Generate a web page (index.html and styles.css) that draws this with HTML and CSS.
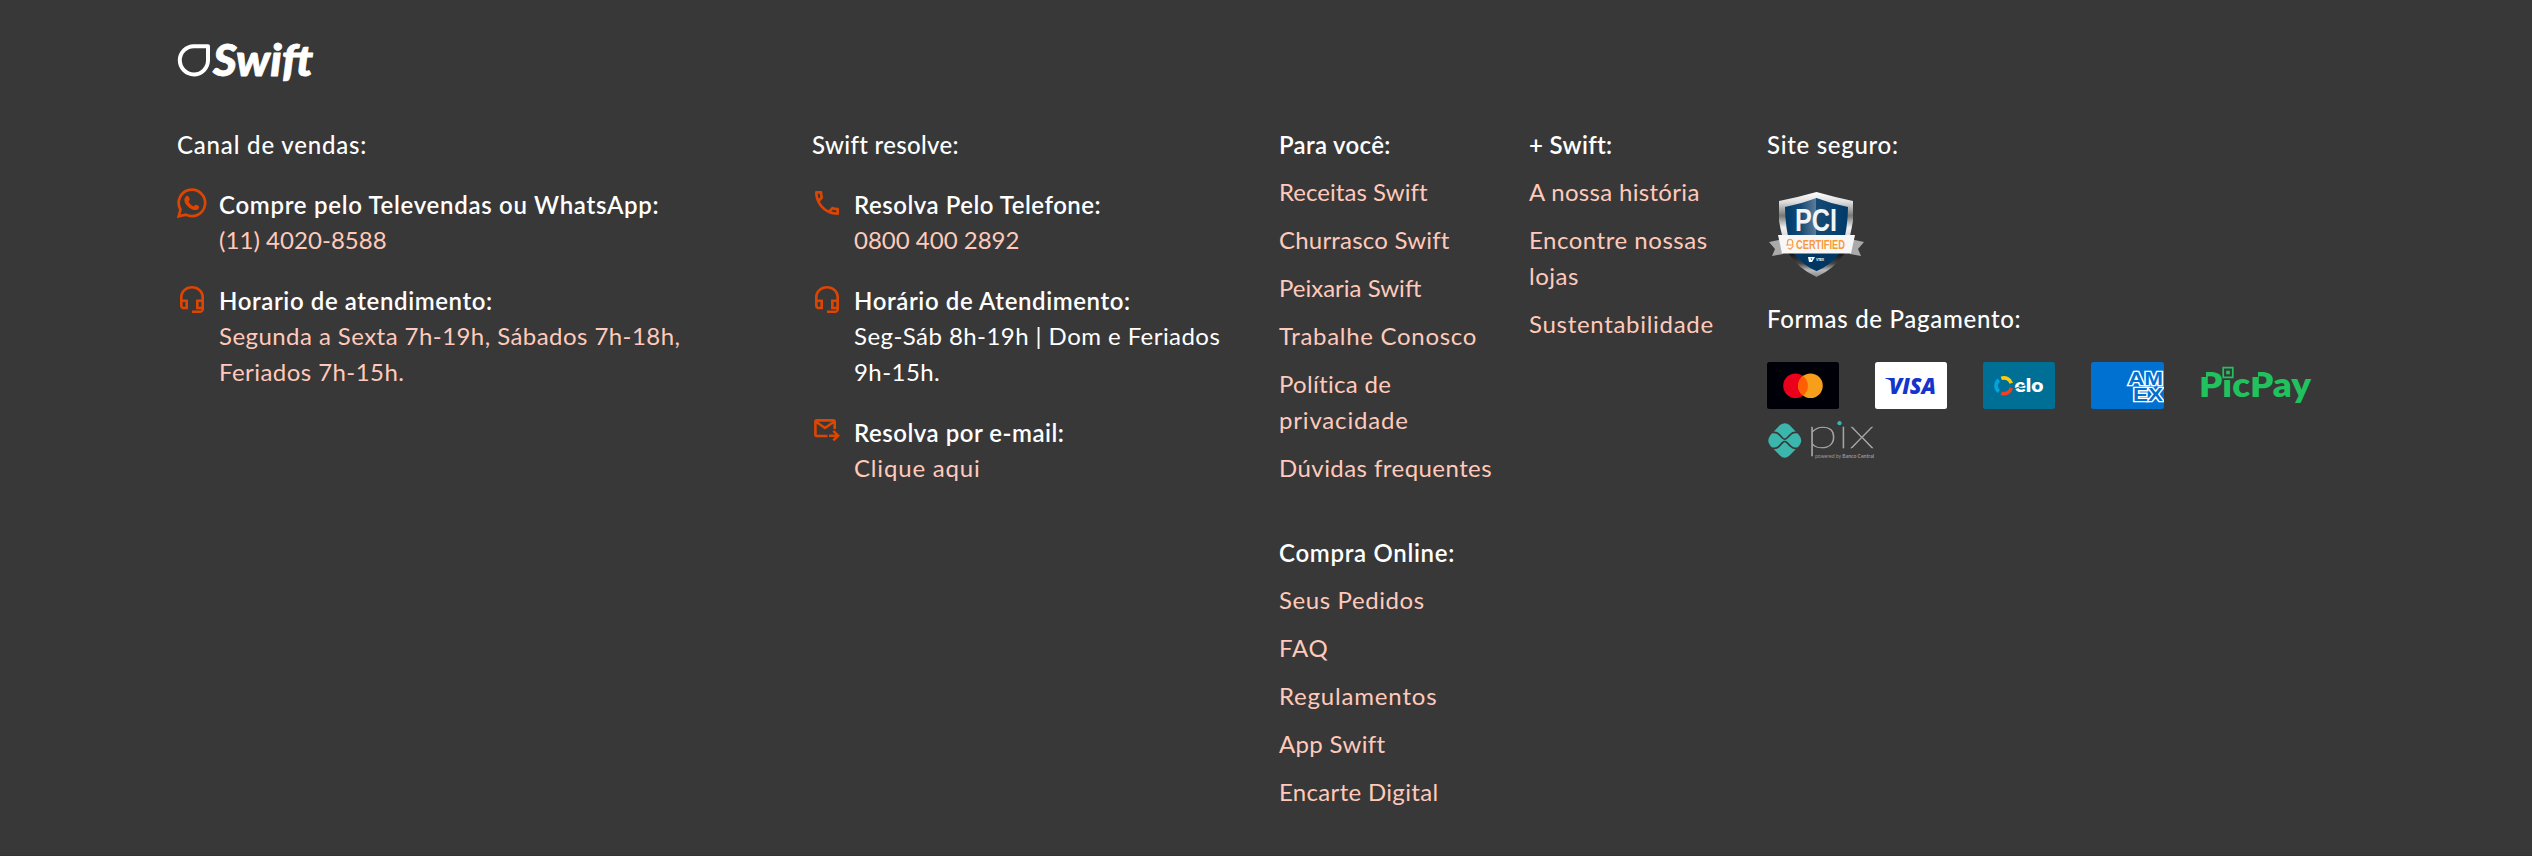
FILE: index.html
```html
<!DOCTYPE html>
<html lang="pt-BR">
<head>
<meta charset="utf-8">
<title>Swift</title>
<link rel="stylesheet" href="styles.css">
</head>
<body>
<svg width="0" height="0" class="defs">
  <symbol id="headset" viewBox="3 1 18 22" preserveAspectRatio="none"><path d="M12 1a9 9 0 0 0-9 9v7c0 1.66 1.34 3 3 3h3v-8H5v-2c0-3.87 3.13-7 7-7s7 3.13 7 7v2h-4v8h4v1h-7v2h6c1.66 0 3-1.34 3-3V10a9 9 0 0 0-9-9zM7 14v4H6c-.55 0-1-.45-1-1v-3h2zm12 4h-2v-4h2v4z"/></symbol>
</svg>
<footer class="footer">
  <a class="logo">
    <svg width="160" height="60" viewBox="0 0 160 60">
      <path d="M31 6.200H17.200A14.100 14.100 0 1 0 31 20.300Z" fill="none" stroke="#fff" stroke-width="4" stroke-linejoin="round"/>
      <text class="wordmark" x="36" y="36" textLength="100" lengthAdjust="spacingAndGlyphs">Swift</text>
    </svg>
  </a>
  <div class="columns">
    <section>
      <h2 class="title t8">Canal de vendas:</h2>
      <div class="item">
        <svg class="icon wa" width="30" height="30" viewBox="0 0 30 30"><path d="M1.700 28.300 3.500 21.500A13.200 13.200 0 1 1 8.800 26.600Z" fill="none" stroke="#dd4502" stroke-width="2.700"/><path d="M9.200 8.300c.7-.6 2-.6 2.400.2l1.100 2.600c.4 1-.9 1.900-1.200 2.500 1.100 2.200 2.900 3.900 5.100 4.900.8-.5 1.500-2 2.400-1.700l2.700 1.300c.8.5.4 2-.3 2.800-1.500 1.600-3.900 1.500-6.500.3-3.400-1.500-5.700-4-7.100-7-.9-2.100-.4-4.700 1.400-5.900z"/></svg>
        <div><h3 class="t7">Compre pelo Televendas ou WhatsApp:</h3><a class="t1">(11) 4020-8588</a></div>
      </div>
      <div class="item">
        <svg class="icon hs" width="24" height="27"><use href="#headset"/></svg>
        <div><h3 class="t6">Horario de atendimento:</h3><a class="t4">Segunda a Sexta 7h-19h, Sábados 7h-18h,<br>Feriados 7h-15h.</a></div>
      </div>
    </section>
    <section>
      <h2 class="title t3">Swift resolve:</h2>
      <div class="item">
        <svg class="icon ph" width="24" height="24" viewBox="3 3 18 18"><path d="M6.540 5c.06.89.21 1.760.45 2.590l-1.200 1.200c-.41-1.200-.67-2.470-.76-3.790h1.510m9.860 12.020c.85.24 1.720.39 2.600.45v1.490c-1.320-.09-2.590-.35-3.800-.75l1.200-1.190M7.500 3H4c-.55 0-1 .45-1 1 0 9.390 7.610 17 17 17 .55 0 1-.45 1-1v-3.490c0-.55-.45-1-1-1-1.240 0-2.450-.2-3.570-.57-.1-.04-.21-.05-.31-.05-.26 0-.51.1-.71.29l-2.200 2.200c-2.830-1.450-5.150-3.760-6.590-6.590l2.200-2.200c.28-.28.36-.67.25-1.020C8.700 6.450 8.500 5.250 8.500 4c0-.55-.45-1-1-1z"/></svg>
        <div><h3 class="t5">Resolva Pelo Telefone:</h3><a class="t0">0800 400 2892</a></div>
      </div>
      <div class="item">
        <svg class="icon hs" width="24" height="27"><use href="#headset"/></svg>
        <div><h3 class="t6">Horário de Atendimento:</h3><p class="t4">Seg-Sáb 8h-19h | Dom e Feriados<br>9h-15h.</p></div>
      </div>
      <div class="item">
        <svg class="icon ml" width="26" height="22" viewBox="0 0 26 22"><path d="M13.500 17H2.800Q1.400 17 1.400 15.600V2.800Q1.400 1.400 2.800 1.400H19.300Q20.700 1.400 20.700 2.800V10M2 2.800 11 9 20 2.800M15 16.700H23M19.300 11.900 24.100 16.700 19.300 21.400" fill="none" stroke="#dd4502" stroke-width="2.600"/></svg>
        <div><h3 class="t5">Resolva por e-mail:</h3><a class="t8">Clique aqui</a></div>
      </div>
    </section>
    <section>
      <h2 class="title strong t3">Para você:</h2>
      <ul>
        <li class="t1">Receitas Swift</li>
        <li class="t2">Churrasco Swift</li>
        <li class="t0">Peixaria Swift</li>
        <li class="t7">Trabalhe Conosco</li>
        <li><span class="t3">Política de</span><br><span class="t8">privacidade</span></li>
        <li class="t4">Dúvidas frequentes</li>
      </ul>
      <h2 class="title strong second t7">Compra Online:</h2>
      <ul>
        <li class="t6">Seus Pedidos</li>
        <li class="t8">FAQ</li>
        <li class="t8">Regulamentos</li>
        <li class="t3">App Swift</li>
        <li class="t3">Encarte Digital</li>
      </ul>
    </section>
    <section>
      <h2 class="title strong t3">+ Swift:</h2>
      <ul>
        <li class="t3">A nossa história</li>
        <li class="t5">Encontre nossas<br>lojas</li>
        <li class="t7">Sustentabilidade</li>
      </ul>
    </section>
    <section>
      <h2 class="title t7">Site seguro:</h2>
      <svg class="pci" width="98" height="90" viewBox="0 0 98 90">
        <defs>
          <linearGradient id="silver" x1="0" y1="0" x2="0" y2="1"><stop offset="0" stop-color="#fff"/><stop offset=".12" stop-color="#ddd"/><stop offset=".28" stop-color="#777"/><stop offset=".42" stop-color="#f0f0f0"/><stop offset=".6" stop-color="#ccc"/><stop offset=".72" stop-color="#111"/><stop offset=".84" stop-color="#444"/><stop offset=".92" stop-color="#bbb"/><stop offset="1" stop-color="#888"/></linearGradient>
          <linearGradient id="navy"><stop offset="0" stop-color="#003a68"/><stop offset=".25" stop-color="#164a75"/><stop offset=".49" stop-color="#5c7c98"/><stop offset=".5" stop-color="#164a75"/><stop offset="1" stop-color="#003a68"/></linearGradient>
        </defs>
        <path d="M2 52 16 49V64L5 66 8 59ZM97 52 83 49V64L94 66 91 59Z" fill="#aaa"/>
        <path d="M12 11Q32 7 49.500 2Q67 7 86 11V31Q83 48 79 61Q69 78 49.500 87Q30 78 20 61Q15 48 12 31Z" fill="url(#silver)"/>
        <path d="M18 17Q34 14 49.500 8Q65 14 81 17Q81 37 75 59Q66 74 49.500 81Q33 74 24 59Q18 37 18 17Z" fill="url(#navy)"/>
        <path d="M24 59H75Q66 74 49.500 81Q33 74 24 59Z" fill="#003763"/>
        <text x="28" y="40.500" class="pci-name" textLength="42" lengthAdjust="spacingAndGlyphs">PCI</text>
        <path d="M11 45H88L84 63.500H15Z" fill="#f7f7f7"/>
        <path d="M20.500 55v-3a2.600 2.600 0 0 1 5.200 0v3M19 55h7M21 58l2.500 1.200 3-3.500" fill="none" stroke="#f7a04a" stroke-width="1.200"/>
        <text x="29" y="58.800" class="pci-cert" textLength="49" lengthAdjust="spacingAndGlyphs">CERTIFIED</text>
        <path d="M41 67h7l-3 5h-3zM43.500 68.500h2l-1 1.500z" fill="#fff" fill-rule="evenodd"/>
        <text x="49" y="71" class="pci-vtex" textLength="8">VTEX</text>
      </svg>
      <h2 class="title pay-title t7">Formas de Pagamento:</h2>
      <div class="payments">
        <svg width="72" height="47" viewBox="0 0 72 47"><rect width="72" height="47" rx="2.500" fill="#000008"/><circle cx="28.500" cy="23.700" r="12.300" fill="#eb001b"/><circle cx="43.500" cy="23.700" r="12.300" fill="#f79e1b"/><path d="M36 13.900a12.300 12.300 0 0 1 0 19.600 12.300 12.300 0 0 1 0-19.600z" fill="#ff5f00"/></svg>
        <svg width="72" height="47" viewBox="0 0 72 47"><rect width="72" height="47" rx="2.500" fill="#fff"/><path d="M10.500 16H16L18 21Q15.500 17.500 10.500 16.800Z" fill="#1434cb"/><text x="14" y="31.500" class="visa" textLength="47" lengthAdjust="spacingAndGlyphs">VISA</text></svg>
        <svg width="72" height="47" viewBox="0 0 72 47"><rect width="72" height="47" rx="2.500" fill="#006f95"/><g fill="none" stroke-width="3.600"><path d="M18.300 16.400A7.600 7.600 0 0 1 28.300 21.300" stroke="#ffcb05"/><path d="M28.300 26A7.600 7.600 0 0 1 18.300 31.200" stroke="#ef4123"/><path d="M15.800 18A7.600 7.600 0 0 0 15.800 29.700" stroke="#00a4e0"/></g><text x="31.500" y="30.400" class="elo" textLength="29" lengthAdjust="spacingAndGlyphs">elo</text><path d="M31 27 43 22.500M57 20.500l3-3.500" stroke="#006f95" stroke-width="1.200"/></svg>
        <svg width="73" height="47" viewBox="0 0 73 47"><rect width="73" height="47" rx="2.500" fill="#0070d1"/><g class="amex"><text x="37" y="22.500" textLength="35" lengthAdjust="spacingAndGlyphs">AM</text><text x="42" y="38.800" textLength="30" lengthAdjust="spacingAndGlyphs">EX</text></g></svg>
        <svg class="picpay" width="114" height="47" viewBox="0 0 114 47"><text x="-1" y="34.500" class="picpay-text" textLength="112" lengthAdjust="spacingAndGlyphs">PicPay</text><path d="M0 9h6v6H0zM52 9h6v6h-6zM22 3h13v15H22z" fill="#383838"/><path d="M23.200 5.700h9.600v9.600h-9.600z" fill="none" stroke="#21c25e" stroke-width="1.700"/><path d="M26.200 8.700h3.600v3.600h-3.600z" fill="#21c25e"/></svg>
        <svg class="pix" width="108" height="50" viewBox="0 0 108 50">
          <path d="M13 4Q18 .5 22.500 4L32 14Q36.500 20 32 25L22.500 34.500Q17.500 39 13 34.500L3.500 25Q-1 20 3.500 14Z" fill="#3cb5ac"/>
          <path d="M3 11.300H7.500Q10 11.300 12 13.300L15.500 17Q17.800 19.300 20 17L23.700 13.300Q25.500 11.300 28 11.300H33M3 27.300H7.500Q10 27.300 12 25.300L15.500 21.700Q17.800 19.300 20 21.700L23.700 25.300Q25.500 27.300 28 27.300H33" fill="none" stroke="#383838" stroke-width="1.700"/>
          <text x="39.500" y="26.500" class="pix-name" textLength="68" lengthAdjust="spacingAndGlyphs">pıx</text>
          <circle cx="72.500" cy="2.200" r="2.100" fill="#3cb5ac"/>
          <text x="48" y="36.500" class="pix-sub" textLength="59" lengthAdjust="spacingAndGlyphs">powered by <tspan>Banco Central</tspan></text>
        </svg>
      </div>
    </section>
  </div>
</footer>
</body>
</html>
```
FILE: styles.css
```css
* { box-sizing: border-box; }
body {
  margin: 0;
  background: #383838;
  color: #fff;
  font: 400 24px/36px Lato, sans-serif;
}
h2, h3, p, ul { margin: 0; padding: 0; font: inherit; list-style: none; }
svg { display: block; flex: none; }
.defs { position: absolute; }
.footer { height: 856px; padding: 40px 0 0 177px; border-bottom: 1px solid #333; }
.logo { display: block; height: 86px; }
.columns { display: grid; grid-template-columns: 635px 467px 250px 238px 600px; white-space: nowrap; }
.title { font-weight: 500; }
.title, h3 { height: 36px; padding-top: 1px; }
.strong, h3 { font-weight: 600; }
.second { margin-top: 48px; }
a, li { color: #ffcabb; }
a { display: block; }
li { margin-top: 12px; }
.item { display: grid; grid-template-columns: 42px 1fr; margin-top: 24px; }
.icon { fill: #dd4502; margin-left: 3px; }
.icon.wa { margin: 2px 0 0 0; }
.icon.hs { margin-top: 4px; }
.icon.ph { margin-top: 5px; }
.icon.ml { margin: 5px 0 0 2px; }
.t0 { letter-spacing: 0; }
.t1 { letter-spacing: .05px; }
.t2 { letter-spacing: .2px; }
.t3 { letter-spacing: .32px; }
.t4 { letter-spacing: .44px; }
.t5 { letter-spacing: .52px; }
.t6 { letter-spacing: .6px; }
.t7 { letter-spacing: .7px; }
.t8 { letter-spacing: .82px; }
.pci { margin-top: 28px; }
.pay-title { margin-top: 20px; }
.payments { display: flex; flex-wrap: wrap; column-gap: 36px; row-gap: 12px; width: 570px; margin-top: 26px; }
.wordmark { font: italic 900 43px Lato, sans-serif; fill: #fff; stroke: #fff; stroke-width: .8px; stroke-linejoin: round; }
.pci-name { font: 700 31px "Liberation Sans", sans-serif; fill: #f4f4f4; }
.pci-cert { font: 700 12.500px "Liberation Sans", sans-serif; fill: #f79a3c; }
.pci-vtex { font: 700 3.500px "Liberation Sans", sans-serif; fill: #fff; }
.visa { font: italic 900 22px "Open Sans", sans-serif; fill: #1434cb; }
.elo { font: 800 19px Lato, sans-serif; fill: #fff; }
.amex { font: 700 19px/1 "Liberation Sans", sans-serif; fill: #0070d1; stroke: #fff; stroke-width: 2.600px; paint-order: stroke; }
.picpay-text { font: 800 33px Lato, sans-serif; fill: #21c25e; }
.pix-name { font: 100 41px Lato, sans-serif; fill: #a3a3a3; stroke: #a3a3a3; stroke-width: .6px; }
.pix-sub { font: 400 5px Lato, sans-serif; fill: #999; }
.pix-sub tspan { font-weight: 700; }
```
